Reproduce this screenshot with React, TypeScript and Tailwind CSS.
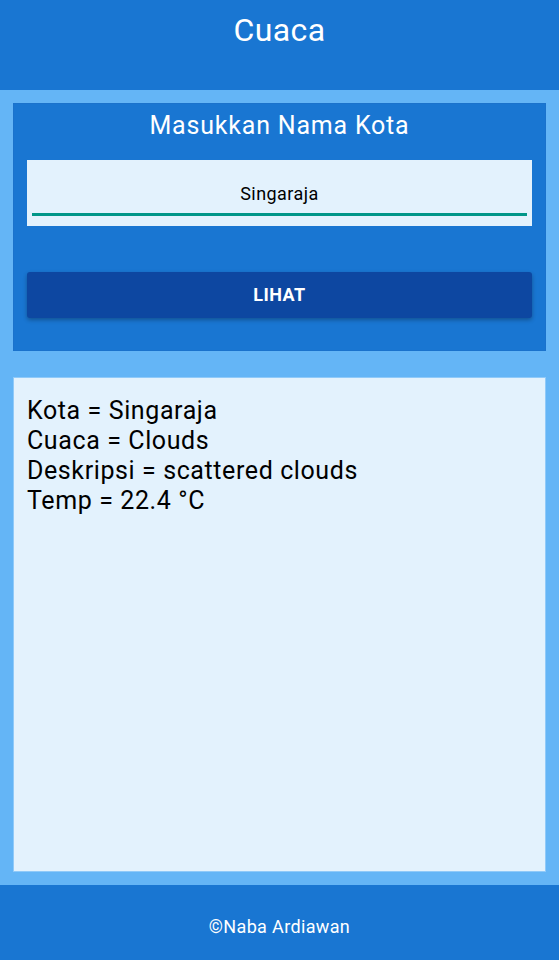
export default function App() {
    const hasil = [
        'Kota = Singaraja',
        'Cuaca = Clouds',
        'Deskripsi = scattered clouds',
        'Temp = 22.4 °C',
    ];

    return (
        <div className="flex h-[960px] w-full flex-col font-['Roboto',sans-serif]">
            {/* Header */}
            <header className="h-[90px] shrink-0 bg-[#1976D2] pt-[10px] text-center text-[32px] leading-[40px] tracking-[0.4px] text-white">
                Cuaca
            </header>

            {/* Content */}
            <main className="flex flex-1 flex-col gap-[26px] bg-[#64B5F6] p-[13px]">
                <section className="flex h-[248px] flex-col border border-[#1A72CC] bg-[#1976D2] px-[13px] pt-[7px]">
                    <h2 className="text-center text-[25px] leading-[30px] tracking-[0.8px] text-white">Masukkan Nama Kota</h2>
                    <div className="mt-[19px] flex h-[66px] flex-col bg-[#E3F2FD] px-[5px] pt-[20px]">
                        <input
                            type="text"
                            defaultValue="Singaraja"
                            className="h-[26px] w-full bg-transparent text-center text-[18px] tracking-[0.45px] text-black outline-none"
                        />
                        <div className="mt-[7px] h-[3px] bg-[#009688]" />
                    </div>
                    <button
                        type="button"
                        className="mt-[46px] h-[46px] w-full rounded-[3px] bg-[#0D47A1] pb-[2px] text-[18px] font-bold tracking-[0.5px] text-white shadow-[0_2px_4px_rgba(0,0,0,0.3)]"
                    >
                        LIHAT
                    </button>
                </section>

                <section className="flex-1 border border-[#90CAF9] bg-[#E3F2FD] px-[13px] pt-[18px]">
                    {hasil.map((baris) => (
                        <p key={baris} className="text-[25px] leading-[30px] tracking-[0.6px] text-black">
                            {baris}
                        </p>
                    ))}
                </section>
            </main>

            {/* Footer */}
            <footer className="flex h-[75px] shrink-0 items-center justify-center bg-[#1976D2] pt-[8px] text-[18px] tracking-[0.35px] text-white">
                ©Naba Ardiawan
            </footer>
        </div>
    );
}
